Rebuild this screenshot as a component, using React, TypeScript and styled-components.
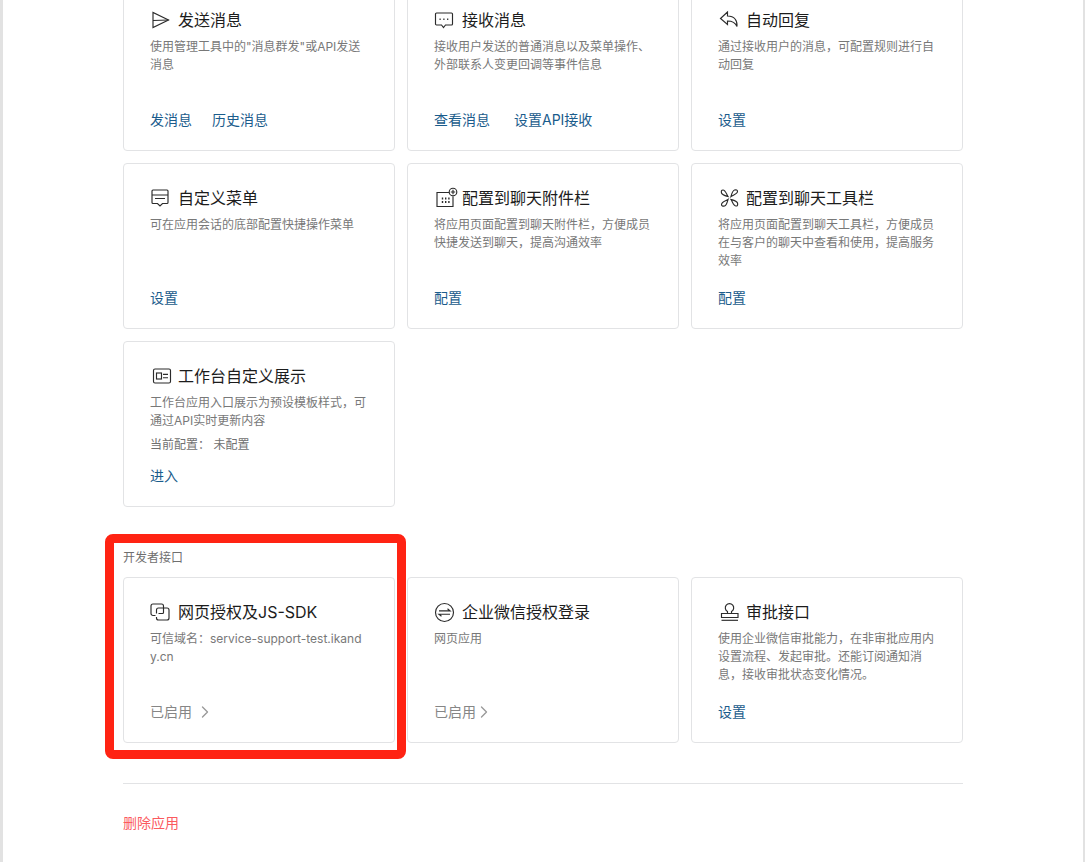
import { ReactNode } from 'react'
import styled, { createGlobalStyle } from 'styled-components'
import { ChevronRight } from 'lucide-react'

const GlobalStyle = createGlobalStyle`
    html, body {
        margin: 0;
        padding: 0;
        height: 100%;
        overflow: hidden;
        background: #e2e2e2;
    }
`

const Page = styled.div`
    margin: 0 2px 0 3px;
    height: 862px;
    overflow: hidden;
    background: #fff;
    padding: 0 120px;
    font-family: Inter, "Noto Sans CJK SC", sans-serif;
`

const CardGrid = styled.div<{ $top?: number }>`
    display: grid;
    grid-template-columns: repeat(3, 272px);
    grid-auto-rows: 166px;
    gap: 12px;
    margin-top: ${p => p.$top ?? 0}px;
`

const Card = styled.div`
    box-sizing: border-box;
    display: flex;
    flex-direction: column;
    padding: 22px 26px 20px;
    border: 1px solid #e2e3e5;
    border-radius: 4px;
    background: #fff;
`

const CardTitle = styled.div`
    display: flex;
    align-items: center;
    gap: 8px;
    height: 24px;
    font-size: 16px;
    line-height: 24px;
    color: #1c1c1c;
    svg {
        flex: none;
        width: 20px;
        height: 20px;
        overflow: visible;
        fill: none;
        stroke: #2b2b2b;
        stroke-width: 1.15;
    }
`

const CardText = styled.div`
    margin-top: 6px;
    font-size: 12px;
    line-height: 18px;
    color: #787878;
    word-break: break-all;
`

const CurrentConfig = styled(CardText)`
    color: #707070;
`

const CardFooter = styled.div<{ $gap?: number }>`
    display: flex;
    align-items: center;
    gap: ${p => p.$gap ?? 20}px;
    margin-top: auto;
    height: 20px;
    font-size: 14px;
    line-height: 20px;
`

const ActionLink = styled.a`
    color: #1a5c8c;
    cursor: pointer;
`

const Status = styled.span<{ $offset: number }>`
    display: flex;
    align-items: center;
    color: #868686;
    svg {
        width: 20px;
        height: 20px;
        margin-left: ${p => p.$offset}px;
        color: #999;
    }
`

const ApiSection = styled.section`
    position: relative;
    margin-top: 42px;
`

const SectionLabel = styled.div`
    margin-bottom: 10px;
    font-size: 12px;
    line-height: 18px;
    color: #6f6f6f;
`

const Highlight = styled.div`
    position: absolute;
    left: -18px;
    top: -15px;
    box-sizing: border-box;
    width: 301px;
    height: 225px;
    border: 9px solid #ff2313;
    border-radius: 8px;
    pointer-events: none;
`

const Divider = styled.hr`
    margin: 40px 0 0;
    border: 0;
    border-top: 1px solid #e2e3e5;
`

const DeleteLink = styled.a`
    display: block;
    margin-top: 29px;
    font-size: 14px;
    line-height: 20px;
    color: #fb5a5f;
    cursor: pointer;
`

const SendIcon = () => (
    <svg viewBox="0 0 20 20">
        <path d="M3 2.500v15L18.500 10z" />
        <path d="M3 10.500 18.500 10" />
    </svg>
)

const ChatIcon = () => (
    <svg viewBox="0 0 20 20">
        <path d="M2.500 3h15a1 1 0 0 1 1 1v10a1 1 0 0 1-1 1h-6l-2 2.500-2-2.500h-5a1 1 0 0 1-1-1V4a1 1 0 0 1 1-1z" />
        <path d="M5.500 9.300h1.200M9.300 9.300h1.200M13.100 9.300h1.200" strokeWidth="1.500" />
    </svg>
)

const ReplyIcon = () => (
    <svg viewBox="0 0 20 20">
        <path d="M9.500 2 2.500 8.500l7 6V11c4 0 7.500.8 9.500 5.500C19.500 10.500 16.500 6 9.500 6z" />
    </svg>
)

const MenuIcon = () => (
    <svg viewBox="0 0 20 20">
        <path d="M3 2h14a1 1 0 0 1 1 1v11.500a1 1 0 0 1-1 1h-4.500L10 18l-2.500-2.500H3a1 1 0 0 1-1-1V3a1 1 0 0 1 1-1z" />
        <path d="M2 7h16M5 10.500h10" />
    </svg>
)

const AttachIcon = () => (
    <svg viewBox="0 0 20 20">
        <path d="M15 4.500H3v14h16V8.500" />
        <path d="M7.800 10.500h1.400M11 10.500h1.400M14.200 10.500h1.400M7.800 14h1.400M11 14h1.400M14.200 14h1.400" strokeWidth="1.800" />
        <circle cx="19" cy="4" r="3.800" />
        <path d="M19 1.800v4.400M16.800 4h4.400" />
    </svg>
)

const Petal = ({ angle }: { angle: number }) => (
    <path
        d="M10 8.500C8.500 6.500 7.500 2 5 2 3.500 2 3 3.300 3.500 5c.6 2 4 2.800 6.500 3.500z"
        transform={`rotate(${angle} 11.500 10)`}
    />
)

const ToolsIcon = () => (
    <svg viewBox="0 0 20 20">
        <Petal angle={0} />
        <Petal angle={90} />
        <Petal angle={180} />
        <Petal angle={270} />
    </svg>
)

const WorkbenchIcon = () => (
    <svg viewBox="0 0 20 20" strokeWidth="1.300">
        <rect x="3.500" y="3" width="17" height="14" rx="1.500" />
        <rect x="6.500" y="7" width="5" height="6" />
        <path d="M13 8.300h5M13 11.700h5" />
    </svg>
)

const AuthIcon = () => (
    <svg viewBox="0 0 20 20">
        <path d="M5.500 13.500H3a2 2 0 0 1-2-2V4a2 2 0 0 1 2-2h8.500a2 2 0 0 1 2 2v6.500a1 1 0 0 1-1 1H8.500" />
        <path d="M6.500 11.500V8a2 2 0 0 1 2-2H17a2 2 0 0 1 2 2v8a2 2 0 0 1-2 2H8.500a2 2 0 0 1-2-2v-1" />
    </svg>
)

const LoginIcon = () => (
    <svg viewBox="0 0 20 20" strokeWidth="1.300">
        <circle cx="10.500" cy="10.500" r="9" />
        <path d="M5 8.800h11l-2.500-2M16 12.200H5l2.500 2" />
    </svg>
)

const StampIcon = () => (
    <svg viewBox="0 0 20 20" strokeWidth="1.250">
        <path d="M9.500 11.500V9.500a4.200 4.200 0 1 1 4 0v2" />
        <path d="M3.500 11.500H20v4H3.500z" />
        <path d="M3.500 18.300H20" />
    </svg>
)

type FeatureCardProps = {
    icon: ReactNode
    title: string
    text: string
    children: ReactNode
    config?: string
    footerGap?: number
}

const FeatureCard = ({ icon, title, text, children, config, footerGap }: FeatureCardProps) => (
    <Card>
        <CardTitle>
            {icon}
            <span>{title}</span>
        </CardTitle>
        <CardText>{text}</CardText>
        {config && <CurrentConfig>{config}</CurrentConfig>}
        <CardFooter $gap={footerGap}>{children}</CardFooter>
    </Card>
)

export default function App() {
    return (
        <Page>
            <GlobalStyle />
            <CardGrid $top={-15}>
                <FeatureCard icon={<SendIcon />} title="发送消息" text={'使用管理工具中的"消息群发"或API发送消息'}>
                    <ActionLink>发消息</ActionLink>
                    <ActionLink>历史消息</ActionLink>
                </FeatureCard>
                <FeatureCard icon={<ChatIcon />} title="接收消息" text="接收用户发送的普通消息以及菜单操作、外部联系人变更回调等事件信息" footerGap={24}>
                    <ActionLink>查看消息</ActionLink>
                    <ActionLink>设置API接收</ActionLink>
                </FeatureCard>
                <FeatureCard icon={<ReplyIcon />} title="自动回复" text="通过接收用户的消息，可配置规则进行自动回复">
                    <ActionLink>设置</ActionLink>
                </FeatureCard>
                <FeatureCard icon={<MenuIcon />} title="自定义菜单" text="可在应用会话的底部配置快捷操作菜单">
                    <ActionLink>设置</ActionLink>
                </FeatureCard>
                <FeatureCard icon={<AttachIcon />} title="配置到聊天附件栏" text="将应用页面配置到聊天附件栏，方便成员快捷发送到聊天，提高沟通效率">
                    <ActionLink>配置</ActionLink>
                </FeatureCard>
                <FeatureCard icon={<ToolsIcon />} title="配置到聊天工具栏" text="将应用页面配置到聊天工具栏，方便成员在与客户的聊天中查看和使用，提高服务效率">
                    <ActionLink>配置</ActionLink>
                </FeatureCard>
                <FeatureCard icon={<WorkbenchIcon />} title="工作台自定义展示" text="工作台应用入口展示为预设模板样式，可通过API实时更新内容" config="当前配置： 未配置">
                    <ActionLink>进入</ActionLink>
                </FeatureCard>
            </CardGrid>

            <ApiSection>
                <SectionLabel>开发者接口</SectionLabel>
                <CardGrid>
                    <FeatureCard icon={<AuthIcon />} title="网页授权及JS-SDK" text="可信域名：service-support-test.ikandy.cn">
                        <Status $offset={3}>已启用<ChevronRight strokeWidth={1.6} /></Status>
                    </FeatureCard>
                    <FeatureCard icon={<LoginIcon />} title="企业微信授权登录" text="网页应用">
                        <Status $offset={-2}>已启用<ChevronRight strokeWidth={1.6} /></Status>
                    </FeatureCard>
                    <FeatureCard icon={<StampIcon />} title="审批接口" text="使用企业微信审批能力，在非审批应用内设置流程、发起审批。还能订阅通知消息，接收审批状态变化情况。">
                        <ActionLink>设置</ActionLink>
                    </FeatureCard>
                </CardGrid>
                <Highlight />
            </ApiSection>

            <Divider />
            <DeleteLink>删除应用</DeleteLink>
        </Page>
    )
}
